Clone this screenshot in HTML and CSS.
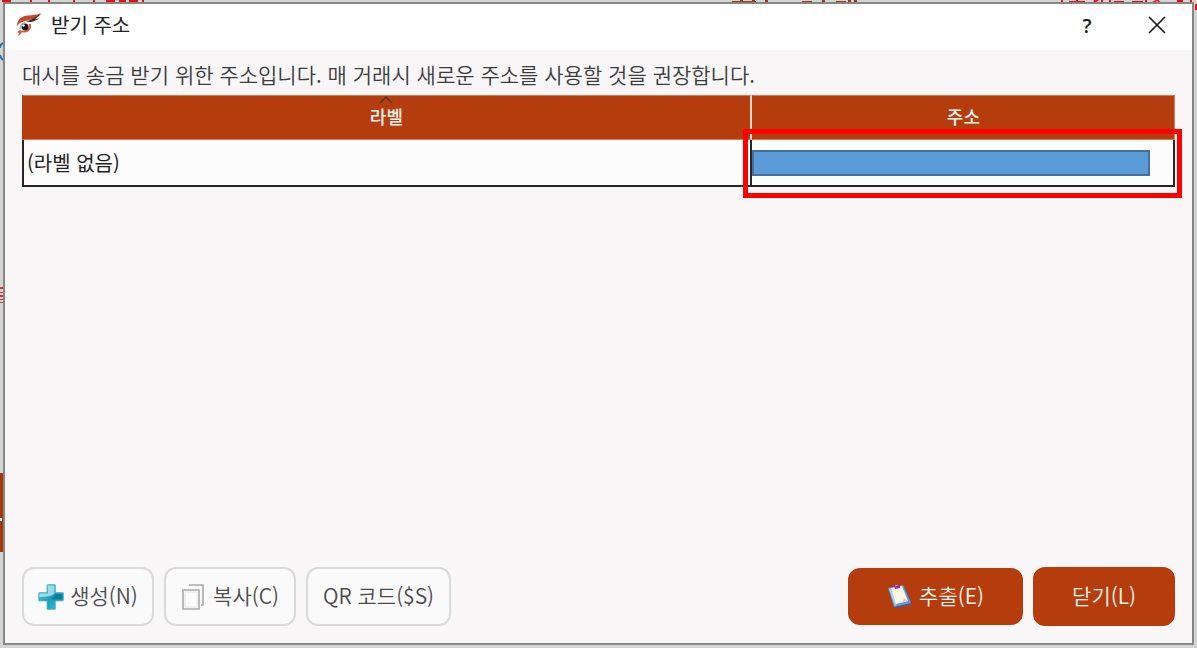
FILE: index.html
```html
<!DOCTYPE html>
<html lang="ko">
<head>
<meta charset="utf-8">
<meta name="viewport" content="width=device-width, initial-scale=1">
<title>받기 주소</title>
<link rel="stylesheet" href="styles.css">
</head>
<body>
<!-- Slivers of the window behind the dialog -->
<div class="backdrop" aria-hidden="true">
  <svg class="sliver sliver-top-left" width="150" height="3" viewBox="0 0 150 3">
    <path fill="#e8100c" d="M2 0h9v2H2zM30 0h2v2h-2zM48 0h2v2h-2zM73 0h2v2h-2zM93 0h2v2h-2zM106 0h9v2h-9zM119 0h7v2h-7zM129 0h9v2h-9zM142 0h2v2h-2z"/>
  </svg>
  <svg class="sliver sliver-top-mid" width="130" height="3" viewBox="0 0 130 3">
    <path fill="#9a3a10" d="M1 1h24v1H1zM9 0h3v3H9zM21 0h3v3h-3zM34 0h3v3h-3zM71 1h10v1H71zM91 0h3v3h-3zM105 1h10v1h-10zM117 0h3v3h-3zM123 0h3v3h-3z"/>
  </svg>
  <svg class="sliver sliver-top-right" width="137" height="12" viewBox="0 0 137 12">
    <path fill="#e8100c" d="M1 0h2v3H1zM9 1h16v1H9zM16 0h2v2h-2zM34 0l5 0-4 3h-2zM41 0h2v3h-2zM49 0h2v3h-2zM54 1h10v1H54zM72 1h11v1H72zM85 0h2v3h-2zM92 2l4-2h2l4 3h-2l-3-2-3 2zM117 0h6v2h-6zM130 0h2v3h-2zM135 4h2v6h-2z"/>
  </svg>
  <svg class="sliver sliver-left" width="5" height="520" viewBox="0 0 5 520">
    <path fill="none" stroke="#2473b5" stroke-width="2" d="M5 3Q0 3 0 8M0 15Q1 20 5 20"/>
    <path fill="#555" d="M3 72h2v16H3zM3 161h2v16H3z"/>
    <path fill="#e63030" d="M0 247h5v2H0zM0 252h5v1H0zM0 255h5v2H0zM0 259h5v1H0zM0 262h5v1H0z"/>
    <path fill="#a83608" d="M0 433h5v79H0z"/>
    <path fill="#fff" d="M0 478h2v3H0z"/>
  </svg>
</div>
<main class="dialog" role="dialog" aria-labelledby="dialog-title">
  <header class="titlebar">
    <svg class="app-icon" width="26" height="26" viewBox="0 0 26 26" aria-hidden="true">
      <path fill="#c64a2b" d="M1 14C1 7 6 4 12 3.500C17 3 21 3 25 1C23 5 19 7 14 8C8 9 4 10 1 14z"/>
      <path fill="#3c302d" d="M10 9C13 9 15 8 17 6.500L25 2L19 7L24 6.500L17 9.500C14 10.500 12 10 10 9z"/>
      <path fill="#d4603f" d="M15 12C16 18 12 22 5 20L6 21L2 24L3 21L1 20L4 18C9 20 13 18 13 12z"/>
      <circle cx="9" cy="15" r="3.400" fill="#171717"/>
      <circle cx="7.500" cy="13.500" r="1.200" fill="#fff"/>
      <path fill="none" stroke="#8b9398" stroke-width="1" d="M4 17Q4 12 9 10.500"/>
    </svg>
    <h1 class="title" id="dialog-title">받기 주소</h1>
    <div class="window-controls">
      <button class="window-button help" type="button" aria-label="도움말">?</button>
      <button class="window-button" type="button" aria-label="닫기">
        <svg width="18" height="18" viewBox="0 0 18 18" aria-hidden="true"><path d="M1 1L17 17M17 1L1 17" fill="none" stroke="#1c1c1c" stroke-width="1.700"/></svg>
      </button>
    </div>
  </header>
  <section class="content">
    <p class="description">대시를 송금 받기 위한 주소입니다. 매 거래시 새로운 주소를 사용할 것을 권장합니다.</p>
    <table class="addresses">
      <thead>
        <tr>
          <th class="label-column" scope="col" aria-sort="ascending">라벨
            <svg class="sort-mark" width="14" height="8" viewBox="0 0 14 8" aria-hidden="true"><path d="M1 7L7 1L13 7" fill="none" stroke="#62301c" stroke-width="1.600"/></svg>
          </th>
          <th class="address-column" scope="col">주소</th>
        </tr>
      </thead>
      <tbody>
        <tr>
          <td>(라벨 없음)</td>
          <td class="address-cell"><div class="masked-address"></div><div class="highlight"></div></td>
        </tr>
      </tbody>
    </table>
    <footer class="actions">
      <button class="button with-icon" type="button">
        <svg width="26" height="26" viewBox="0 0 26 26" aria-hidden="true">
          <defs>
            <linearGradient id="plus" x1="0" y1="0" x2="1" y2="1"><stop offset="0" stop-color="#7fd2df"/><stop offset=".5" stop-color="#1b9db4"/><stop offset="1" stop-color="#43c3d6"/></linearGradient>
          </defs>
          <path d="M9 1.500Q9 .5 10 .5H16.500Q17.500 .5 17.500 1.500V8.500H24.500Q25.500 8.500 25.500 9.500V16Q25.500 17 24.500 17H17.500V24.500Q17.500 25.500 16.500 25.500H10Q9 25.500 9 24.500V17H1.500Q.5 17 .5 16V9.500Q.5 8.500 1.500 8.500H9z" fill="url(#plus)" stroke="#62b6c6" stroke-width=".8"/>
          <path d="M10 1.500H16.500V9.500Q13 13 1.500 13V9.500H10z" fill="#b4e6ed" opacity=".8"/>
          <path d="M17 10H24.500V15.500H13Q16 13 17 10z" fill="#087d97"/>
        </svg>
        <span>생성(N)</span>
      </button>
      <button class="button with-icon" type="button">
        <svg width="26" height="26" viewBox="0 0 26 26" aria-hidden="true">
          <path d="M8 1H22V21H20" fill="none" stroke="#aaa" stroke-width="1.600"/>
          <path d="M2 6H18V25H2z" fill="#fbfbfb" stroke="#aaa" stroke-width="1.600"/>
          <path d="M4 8H16V23H4z" fill="none" stroke="#e4e4e4"/>
        </svg>
        <span>복사(C)</span>
      </button>
      <button class="button" type="button"><span>QR 코드($S)</span></button>
      <button class="button primary export" type="button">
        <svg width="26" height="26" viewBox="0 0 26 26" aria-hidden="true">
          <path d="M2 5L17 2L25 20L8 24z" fill="#2f62ae"/>
          <path d="M1 4L16 1L24 19L7 23z" fill="#5d9be5"/>
          <path d="M2 5L5 4L10 20L8 22z" fill="#a9d8f8"/>
          <path d="M4 4L15 2L21 17L9 20z" fill="#fff6e8"/>
          <path d="M17 14L21 17L15 18.500z" fill="#e4cdb4"/>
          <path d="M7 2Q10-1 13 2V4L8 5z" fill="#a52798"/>
          <path d="M8 2L11 1" stroke="#e58bdd" stroke-width="1"/>
        </svg>
        <span>추출(E)</span>
      </button>
      <button class="button primary close" type="button"><span>닫기(L)</span></button>
    </footer>
  </section>
</main>
</body>
</html>
```
FILE: styles.css
```css
* {
  box-sizing: border-box;
}

body {
  display: flex;
  min-height: 100vh;
  margin: 0;
  padding: 2px 3px 3px;
  background: #d3d4d3;
  color: #222;
  font-family: "Noto Sans CJK KR", sans-serif;
}

.backdrop {
  position: absolute;
  inset: 0;
  overflow: hidden;
}

.sliver {
  position: absolute;
  top: 0;
}

.sliver-top-left { left: 0; }
.sliver-top-mid { left: 731px; }
.sliver-top-right { right: 0; }
.sliver-left { top: 40px; left: 0; }

.dialog {
  position: relative;
  display: flex;
  flex: 1;
  flex-direction: column;
  border: 2px solid #858787;
  background: #f8f6f7;
}

.titlebar {
  display: flex;
  align-items: center;
  height: 46px;
  padding: 0 15px 4px 11px;
  background: #fff;
}

.title {
  margin: 0 0 0 9px;
  font-size: 20px;
  font-weight: 400;
  line-height: 30px;
}

.window-controls {
  display: flex;
  margin-left: auto;
  gap: 30px;
}

.window-button {
  display: flex;
  align-items: center;
  justify-content: center;
  width: 40px;
  height: 40px;
  padding: 0;
  border: 0;
  background: transparent;
  color: #1c1c1c;
}

.help {
  font: 600 20px "Open Sans", sans-serif;
}

.content {
  display: flex;
  flex: 1;
  flex-direction: column;
  padding: 8px 17px 17px;
}

.description {
  margin: 0;
  color: #3c3c3c;
  font-size: 21px;
  font-weight: 350;
  line-height: 32px;
}

.addresses {
  width: 100%;
  margin-top: 5px;
  border-collapse: separate;
  border-spacing: 0;
  table-layout: fixed;
}

.addresses th {
  position: relative;
  height: 45px;
  padding: 0 0 4px;
  border: 1px solid #d27c5c;
  border-left-color: #b53d0d;
  background: #b53d0d;
  color: #fff4ee;
  font-size: 18px;
  font-weight: 500;
  line-height: 24px;
}

.addresses .label-column {
  width: 63.3%;
  border-right: 2px solid #f0d8ce;
}

.sort-mark {
  position: absolute;
  top: 0;
  left: 50%;
  margin-left: -7px;
}

.addresses td {
  height: 47px;
  padding: 0 3px;
  border: solid #262626;
  border-width: 0 2px 2px;
  background: #fcfcfc;
  font-size: 20px;
  line-height: 30px;
}

.addresses .address-cell {
  position: relative;
  padding: 0 23px 0 0;
  border-left: 0;
}

.masked-address {
  height: 26px;
  border: 2px solid #41719c;
  background: #5b9bd5;
}

.highlight {
  position: absolute;
  inset: -11px -9px -13px;
  border: 5px solid #f00;
}

.actions {
  display: flex;
  align-items: center;
  gap: 10px;
  margin-top: auto;
}

.button {
  display: flex;
  align-items: center;
  justify-content: center;
  gap: 6px;
  height: 59px;
  padding: 0 15px;
  border: 2px solid #d9dbdb;
  border-radius: 12px;
  background: #fafafa;
  color: #4b4b4b;
  font: 350 21px/30px "Noto Sans CJK KR", sans-serif;
  white-space: nowrap;
}

.button span {
  padding-bottom: 3px;
}

.with-icon {
  min-width: 132px;
  padding: 0 13px;
}

.primary {
  min-width: 142px;
  border-color: #b53d0d;
  background: #b53d0d;
  color: #fff4ee;
}

.export {
  min-width: 175px;
  height: 57px;
  margin-left: auto;
}
```
